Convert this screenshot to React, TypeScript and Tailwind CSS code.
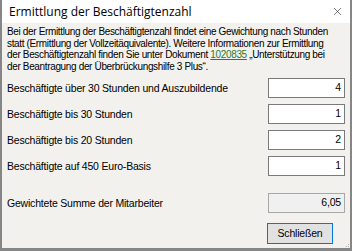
import { X } from 'lucide-react'

const rows = [
  { label: 'Beschäftigte über 30 Stunden und Auszubildende', value: '4' },
  { label: 'Beschäftigte bis 30 Stunden', value: '1' },
  { label: 'Beschäftigte bis 20 Stunden', value: '2' },
  { label: 'Beschäftigte auf 450 Euro-Basis', value: '1' },
]

const sans = { fontFamily: '"Liberation Sans", Arial, sans-serif' }

export default function App() {
  return (
    <div className="flex h-[251px] w-[352px] flex-col bg-[#868686] px-[2px] pb-[3px]" style={sans}>
      <div className="flex h-[23px] shrink-0 items-center justify-between bg-white pl-[7px] pr-[6px]">
        <span className="text-[12px] text-black" style={{ fontFamily: '"Open Sans", "Noto Sans", sans-serif' }}>
          Ermittlung der Beschäftigtenzahl
        </span>
        <X className="h-[13px] w-[13px] text-[#333]" strokeWidth={1.2} />
      </div>
      <div className="relative flex flex-1 flex-col bg-[#f2f1ee] pl-[5px] pr-[5px] text-[10.5px] tracking-[-0.2px] text-black">
        <p className="mt-[3px] whitespace-nowrap text-[10px] leading-[11.5px] tracking-[-0.35px]">
          Bei der Ermittlung der Beschäftigtenzahl findet eine Gewichtung nach Stunden
          <br />
          statt (Ermittlung der Vollzeitäquivalente). Weitere Informationen zur Ermittlung
          <br />
          der Beschäftigtenzahl finden Sie unter Dokument{' '}
          <span className="text-[#2c7a2c] underline">1020835</span> „Unterstützung bei
          <br />
          der Beantragung der Überbrückungshilfe 3 Plus“.
        </p>
        <div className="mt-[6px] flex flex-col gap-[6px]">
          {rows.map((row) => (
            <div key={row.label} className="flex h-[20px] items-center justify-between">
              <span className="pt-[2px]">{row.label}</span>
              <div className="flex h-[20px] w-[77px] items-center justify-end border border-[#7a7a7a] bg-white pr-[3px]">
                {row.value}
              </div>
            </div>
          ))}
        </div>
        <div className="mt-[17px] flex h-[20px] items-center justify-between">
          <span className="pt-[2px]">Gewichtete Summe der Mitarbeiter</span>
          <div className="flex h-[20px] w-[77px] items-center justify-end border border-[#a8a8a8] bg-[#f0f0f0] pr-[3px]">
            6,05
          </div>
        </div>
        <div className="mt-[10px] flex justify-end pr-[12px]">
          <button
            type="button"
            className="flex h-[21px] w-[66px] items-center justify-center border border-[#0078d7] bg-[#e1e1e1] text-[10.5px]"
          >
            Schließen
          </button>
        </div>
        <div className="absolute bottom-[1px] right-[1px] grid grid-cols-3 gap-[1px]">
          <span />
          <span />
          <span className="h-[1px] w-[1px] bg-[#b5b5b5]" />
          <span />
          <span className="h-[1px] w-[1px] bg-[#b5b5b5]" />
          <span className="h-[1px] w-[1px] bg-[#b5b5b5]" />
        </div>
      </div>
    </div>
  )
}
